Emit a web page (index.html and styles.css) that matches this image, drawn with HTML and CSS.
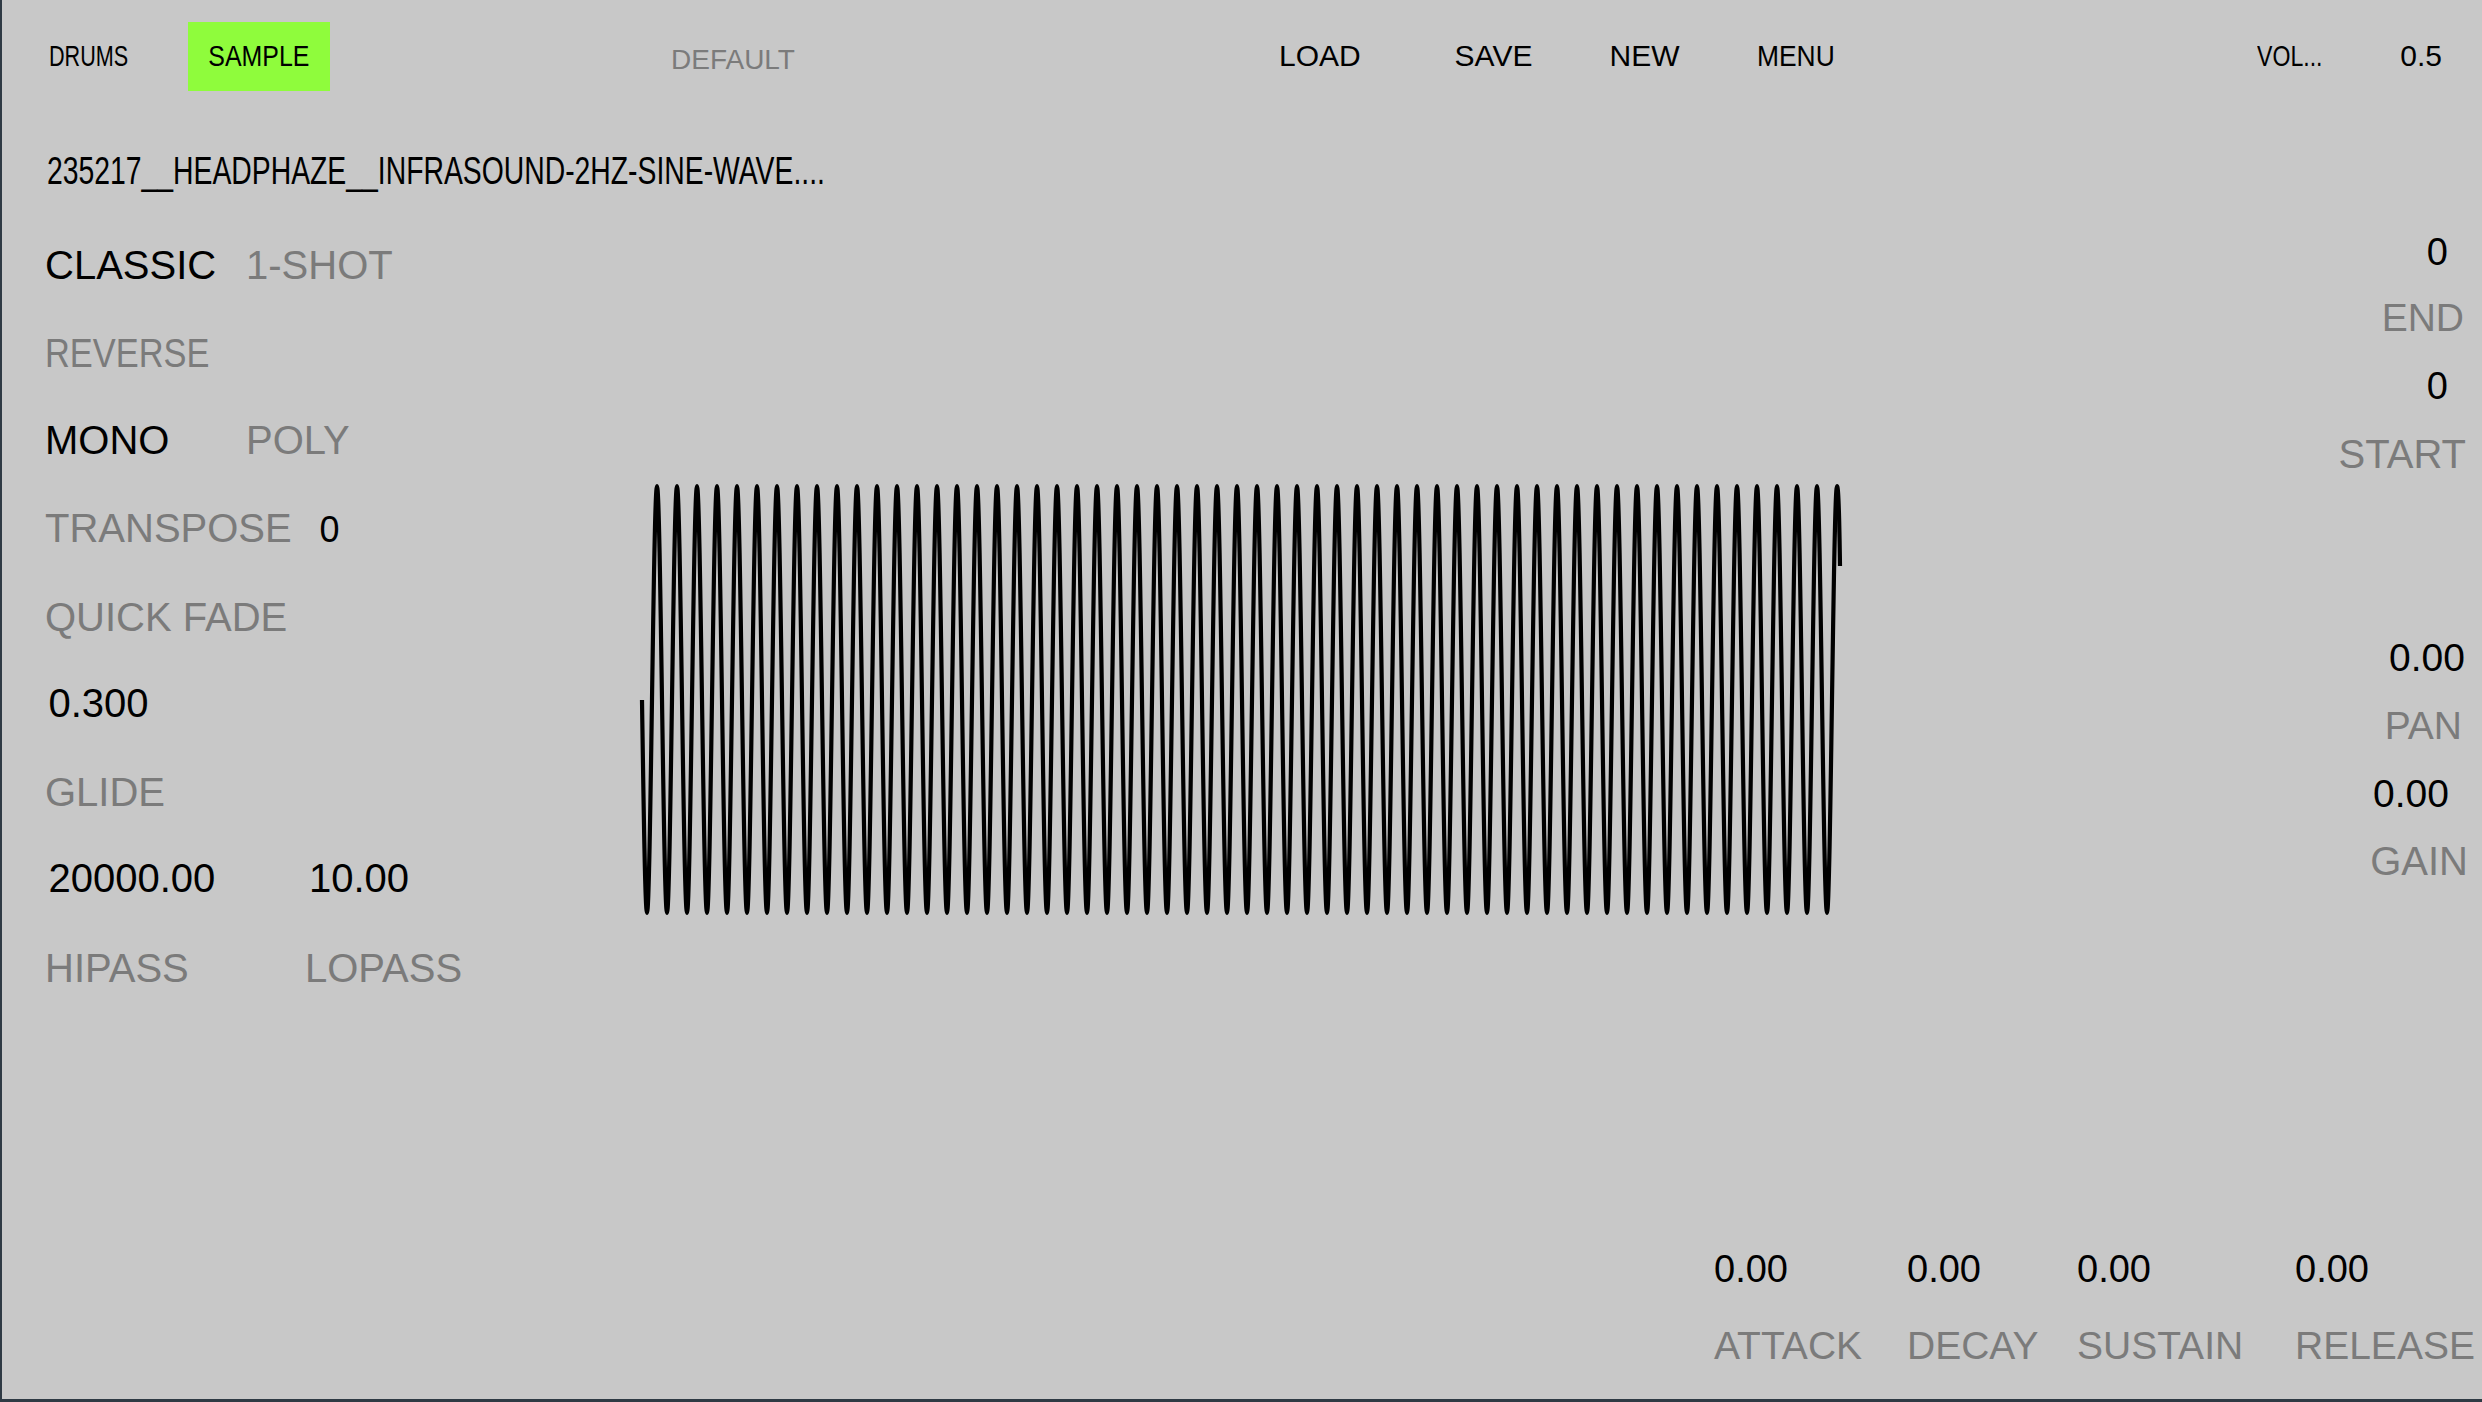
FILE: index.html
```html
<!DOCTYPE html>
<html lang="en">
<head>
<meta charset="utf-8">
<title>Sampler</title>
<link rel="stylesheet" href="styles.css">
</head>
<body>
<div class="app">
  <div class="topbar">
    <div class="tb w-drums"><span class="sq-drums">DRUMS</span></div>
    <div class="tab-on"><span class="sq-sample">SAMPLE</span></div>
    <div class="tb default"><span>DEFAULT</span></div>
    <div class="tb w-load"><span>LOAD</span></div>
    <div class="tb w-save"><span>SAVE</span></div>
    <div class="tb w-new"><span>NEW</span></div>
    <div class="tb w-menu"><span class="sq-menu">MENU</span></div>
    <div class="tb w-vol"><span class="sq-vol">VOL...</span></div>
    <div class="tb"><span>0.5</span></div>
  </div>

  <div class="filename"><span>235217__HEADPHAZE__INFRASOUND-2HZ-SINE-WAVE....</span></div>

  <div class="main">
    <div class="left">
      <div class="row"><span class="c-mode">CLASSIC</span><span class="dim">1-SHOT</span></div>
      <div class="row"><span class="dim sq-rev">REVERSE</span></div>
      <div class="row"><span class="c-mode">MONO</span><span class="dim">POLY</span></div>
      <div class="row"><span class="dim c-tr">TRANSPOSE</span><span class="small-val">0</span></div>
      <div class="row"><span class="dim">QUICK FADE</span></div>
      <div class="row val"><span>0.300</span></div>
      <div class="row"><span class="dim">GLIDE</span></div>
      <div class="row val"><span class="c-fv">20000.00</span><span>10.00</span></div>
      <div class="row"><span class="dim c-fl">HIPASS</span><span class="dim">LOPASS</span></div>
    </div>

    <div class="wavebox">
      <svg class="wave" width="1240" height="480" viewBox="620 460 1240 480">
        <defs>
          <pattern id="cyc" patternUnits="userSpaceOnUse" x="647" y="480" width="20" height="440">
            <path d="M-10 6C-6.36 6-3.64 433 0 433S6.36 6 10 6S16.36 433 20 433S26.36 6 30 6" fill="none" stroke="#000" stroke-width="4.2"/>
          </pattern>
        </defs>
        <rect x="647" y="478" width="1190" height="444" fill="url(#cyc)"/>
        <path d="M642 700C643.67 812 645.2 913 647 913" fill="none" stroke="#000" stroke-width="4.2"/>
        <path d="M1837 486C1838.6 486 1839.4 525 1840 566" fill="none" stroke="#000" stroke-width="4.2"/>
      </svg>
    </div>

    <div class="right">
      <span class="r-v0a">0</span>
      <span class="dim r-end">END</span>
      <span class="r-v0b">0</span>
      <span class="dim r-start">START</span>
      <span class="r-pan">0.00</span>
      <span class="dim r-panl">PAN</span>
      <span class="r-gain">0.00</span>
      <span class="dim r-gainl">GAIN</span>
    </div>
  </div>

  <div class="adsr">
    <span class="av">0.00</span>
    <span class="av">0.00</span>
    <span class="av">0.00</span>
    <span class="av">0.00</span>
    <span class="dim al">ATTACK</span>
    <span class="dim al">DECAY</span>
    <span class="dim al">SUSTAIN</span>
    <span class="dim al">RELEASE</span>
  </div>
</div>
</body>
</html>
```

FILE: styles.css
```css
html, body {
  margin: 0;
  padding: 0;
}

body {
  background: #2f3a44;
  width: 2482px;
  height: 1402px;
  overflow: hidden;
}

.app {
  margin-left: 2px;
  width: 2480px;
  height: 1399px;
  background: #c8c8c8;
  display: flex;
  flex-direction: column;
  font-family: "Liberation Sans", Arial, Helvetica, sans-serif;
  color: #000;
}

.dim {
  color: #7b7b7b;
}

/* ---------- top bar ---------- */
.topbar {
  flex: none;
  display: flex;
  align-items: flex-start;
  height: 92px;
  padding-left: 47px;
  font-size: 30px;
  line-height: 30px;
  white-space: nowrap;
}

.tb {
  margin-top: 40.6px;
}

.topbar span {
  display: inline-block;
  transform-origin: left center;
}

.w-drums { width: 139px; }
.w-load { width: 175.6px; }
.w-save { width: 155px; }
.w-new { width: 147px; }
.w-menu { width: 500px; }
.w-vol { width: 143.7px; }

.sq-drums { transform: scaleX(0.72); }
.sq-menu { transform: scaleX(0.88); }
.sq-vol { transform: scaleX(0.77); }

.tab-on {
  box-sizing: border-box;
  width: 142px;
  height: 69.3px;
  margin-top: 22px;
  padding-top: 18.6px;
  background: #8ffc3c;
  display: flex;
  justify-content: center;
}

.topbar .sq-sample {
  transform: scaleX(0.83);
  transform-origin: center center;
}

.default {
  margin-left: 341px;
  width: 608px;
  margin-top: 46.3px;
  font-size: 28px;
  line-height: 28px;
  color: #7b7b7b;
}

/* ---------- file name ---------- */
.filename {
  flex: none;
  height: 40px;
  margin-top: 59px;
  margin-left: 45px;
  font-size: 38.5px;
  line-height: 40px;
  white-space: nowrap;
}

.filename span {
  display: inline-block;
  transform: scaleX(0.736);
  transform-origin: left center;
}

/* ---------- main area ---------- */
.main {
  flex: 1;
  min-height: 0;
  display: flex;
}

.left {
  flex: none;
  box-sizing: border-box;
  width: 618px;
  padding: 54px 0 0 43px;
  display: grid;
  grid-template-rows: 88px 87px 88px 89px 86px 89px 86px 90px 40px;
  align-content: start;
  font-size: 40px;
  line-height: 40px;
}

.row {
  display: flex;
  align-items: baseline;
  height: 40px;
  white-space: nowrap;
}

.row span {
  display: inline-block;
  flex: none;
}

.row.val {
  padding-left: 3.5px;
}

.c-mode { width: 201px; }
.c-tr { width: 274.5px; }
.c-fv { width: 260.5px; }
.c-fl { width: 260px; }

.sq-rev {
  transform: scaleX(0.86);
  transform-origin: left center;
}

.small-val {
  font-size: 36px;
}

.wavebox {
  flex: none;
  width: 1240px;
}

.wave {
  display: block;
  margin-top: 269px;
}

.right {
  flex: 1;
  display: flex;
  flex-direction: column;
  align-items: flex-end;
  line-height: 40px;
  white-space: nowrap;
}

.right span {
  display: block;
  height: 40px;
}

.r-v0a { font-size: 38px; margin-top: 40.8px; margin-right: 34px; }
.r-end { font-size: 39px; margin-top: 26.7px; margin-right: 18px; }
.r-v0b { font-size: 38px; margin-top: 27.8px; margin-right: 34px; }
.r-start { font-size: 40px; margin-top: 27.8px; margin-right: 16px; }
.r-pan { font-size: 39px; margin-top: 164.4px; margin-right: 17px; }
.r-panl { font-size: 39px; margin-top: 28px; margin-right: 20px; }
.r-gain { font-size: 39px; margin-top: 28px; margin-right: 33px; }
.r-gainl { font-size: 40px; margin-top: 26.6px; margin-right: 14px; }

/* ---------- envelope ---------- */
.adsr {
  flex: none;
  margin: 0 0 33px 1712px;
  display: grid;
  grid-template-columns: 193px 170px 218px 187px;
  grid-auto-rows: 40px;
  row-gap: 37.2px;
  line-height: 40px;
  white-space: nowrap;
}

.av { font-size: 38px; }
.al { font-size: 39px; }
```
